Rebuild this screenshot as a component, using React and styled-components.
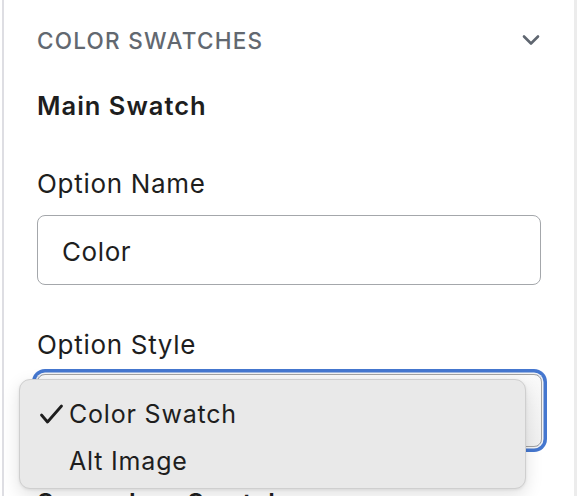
import React from "react";
import styled, { createGlobalStyle } from "styled-components";

const Global = createGlobalStyle`
  html, body { margin: 0; padding: 0; background: #ffffff; }
  body { font-family: Inter, "Noto Sans", "Liberation Sans", sans-serif; color: #1e1e1e; overflow: hidden; }
  * { box-sizing: border-box; }
`;

const Panel = styled.div`
  margin-left: 2px;
  width: 575px;
  height: 496px;
  border-left: 2px solid #dedee3;
  border-right: 3px solid #ececec;
  padding: 27px 0 0 33px;
  overflow: hidden;
`;

const HeaderRow = styled.div`
  display: flex;
  align-items: center;
  justify-content: space-between;
  width: 504px;
  height: 28px;
`;

const HeaderTitle = styled.div`
  font-size: 22.5px;
  line-height: 28px;
  font-weight: 500;
  letter-spacing: 1.25px;
  text-transform: uppercase;
  color: #626870;
`;

const Chevron = styled.svg`
  width: 18px;
  height: 12px;
  margin-right: 1px;
  margin-top: -2px;
`;

const SectionTitle = styled.div`
  font-size: 25.5px;
  line-height: 30px;
  font-weight: 600;
  letter-spacing: 1px;
  color: #1e1e1e;
  margin-top: ${(p) => p.$top}px;
`;

const Label = styled.div`
  font-size: 26px;
  line-height: 32px;
  letter-spacing: 0.7px;
  color: #1e1e1e;
  margin-top: ${(p) => p.$top}px;
  margin-bottom: ${(p) => p.$bottom}px;
`;

const TextInput = styled.div`
  width: 504px;
  height: 70px;
  border: 1.5px solid #a4a7ab;
  border-radius: 8px;
  display: flex;
  align-items: center;
  padding: 3px 0 0 24px;
  font-size: 26px;
  letter-spacing: 0.6px;
  color: #1e1e1e;
`;

const SelectWrap = styled.div`
  position: relative;
  width: 505px;
`;

const SelectBox = styled.div`
  width: 505px;
  height: 73px;
  border: 1.5px solid #a2a2a2;
  border-radius: 8px;
  background: linear-gradient(#fafafa, #f0f0f0);
  box-shadow: 0 0 0 1.5px #f4f4f4, 0 0 0 5px #4577cf;
`;

const Menu = styled.div`
  position: absolute;
  left: -18px;
  top: 5px;
  width: 507px;
  height: 110px;
  background: #e9e9e9;
  border: 1px solid #cfcfcf;
  border-radius: 11px;
  box-shadow: 0 6px 18px rgba(0, 0, 0, 0.12), 0 1px 3px rgba(0, 0, 0, 0.08);
  padding: 10px 0 0 0;
  z-index: 2;
`;

const MenuItem = styled.div`
  display: flex;
  align-items: center;
  height: 47px;
  font-size: 25px;
  letter-spacing: 0.8px;
  color: #1e1e1e;
  padding-left: 18px;
`;

const CheckSlot = styled.span`
  width: 31px;
  display: flex;
  align-items: center;
`;

function Check() {
  return (
    <svg width="26" height="22" viewBox="0 0 26 22">
      <path d="M3.5 12 L9.5 19 L23.5 3" fill="none" stroke="#1e1e1e" strokeWidth="2.8" strokeLinecap="round" strokeLinejoin="round" />
    </svg>
  );
}

export default function App() {
  return (
    <>
      <Global />
      <Panel>
        <HeaderRow>
          <HeaderTitle>Color Swatches</HeaderTitle>
          <Chevron viewBox="0 0 18 12">
            <path d="M2 2.5 L9 9.5 L16 2.5" fill="none" stroke="#5f6670" strokeWidth="2.6" strokeLinecap="round" strokeLinejoin="round" />
          </Chevron>
        </HeaderRow>
        <SectionTitle $top={36}>Main Swatch</SectionTitle>
        <Label $top={47} $bottom={15}>Option Name</Label>
        <TextInput>Color</TextInput>
        <Label $top={44} $bottom={13}>Option Style</Label>
        <SelectWrap>
          <SelectBox />
          <Menu>
            <MenuItem>
              <CheckSlot><Check /></CheckSlot>
              Color Swatch
            </MenuItem>
            <MenuItem>
              <CheckSlot />
              Alt Image
            </MenuItem>
          </Menu>
        </SelectWrap>
        <SectionTitle $top={41}>Secondary Swatches</SectionTitle>
      </Panel>
    </>
  );
}
